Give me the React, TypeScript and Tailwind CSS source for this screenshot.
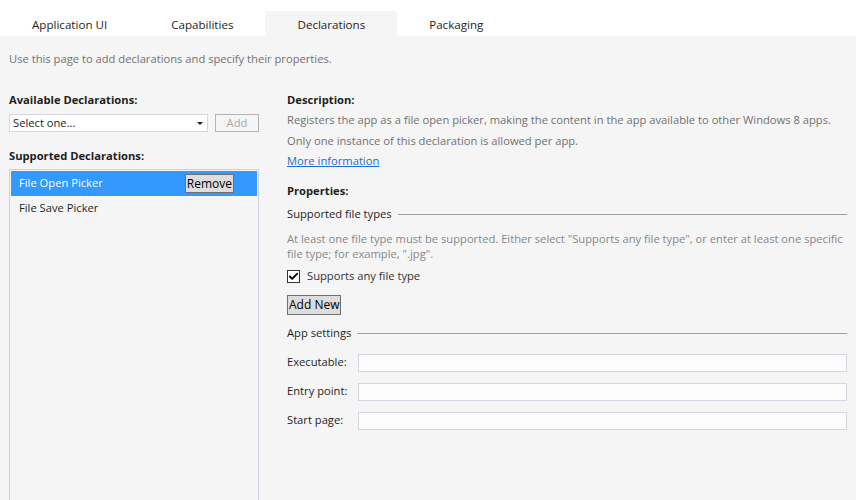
import { Check } from "lucide-react";

const tabs = [
  { name: "Application UI" },
  { name: "Capabilities" },
  { name: "Declarations", active: true },
  { name: "Packaging" },
];

const appSettings = ["Executable:", "Entry point:", "Start page:"];

const GroupTitle = ({ title }: { title: string }) => (
  <div className="flex items-center gap-[6px] h-4 text-[#1e1e1e]">
    <span className="whitespace-nowrap">{title}</span>
    <div className="flex-1 h-px bg-[#a0a0a0]" />
  </div>
);

export default function App() {
  return (
    <div
      className="w-[856px] h-[500px] overflow-hidden bg-[#f5f5f5] text-[11.2px] text-[#1e1e1e]"
      style={{ fontFamily: '"Open Sans", "Noto Sans", sans-serif' }}
    >
      {/* Tab strip */}
      <div className="h-[36px] bg-white flex items-end">
        {tabs.map((tab) => (
          <div
            key={tab.name}
            className={`h-[25px] px-[32px] pt-[2px] flex items-center text-[11.6px] ${
              tab.active ? "bg-[#f5f5f5]" : ""
            }`}
          >
            {tab.name}
          </div>
        ))}
      </div>

      <div className="pl-[9px] pt-[15px] leading-4 text-[#717171]">
        Use this page to add declarations and specify their properties.
      </div>

      <div className="flex mt-[25px] pl-[9px] pr-[9px]">
        {/* Left column */}
        <div className="w-[250px] shrink-0">
          <div className="font-bold leading-4">Available Declarations:</div>
          <div className="flex mt-[6px] gap-[7px]">
            <div className="w-[199px] h-[18px] bg-white border border-[#d6d5e0] flex items-center justify-between pl-[3px] pr-[4px]">
              <span>Select one...</span>
              <div className="w-0 h-0 border-l-[3px] border-r-[3px] border-t-[3px] border-l-transparent border-r-transparent border-t-[#1e1e1e]" />
            </div>
            <button className="w-[44px] h-[18px] border border-[#b4b4b4] text-[#a8a8a8] flex items-center justify-center">
              Add
            </button>
          </div>

          <div className="font-bold leading-4 mt-4">Supported Declarations:</div>
          <div className="mt-[5px] h-[340px] border border-[#d0cfe0] p-px">
            <div className="h-[25px] bg-[#3399ff] text-white flex items-center justify-between pl-[8px] pr-[23px]">
              <span>File Open Picker</span>
              <button className="h-[19px] px-px bg-[#dddddd] border border-[#707070] text-black flex items-center text-[12px]">
                Remove
              </button>
            </div>
            <div className="h-[25px] flex items-center pl-[8px]">File Save Picker</div>
          </div>
        </div>

        {/* Right column */}
        <div className="flex-1 ml-[28px]">
          <div className="font-bold leading-4">Description:</div>
          <div className="mt-[2px] leading-[20.5px] text-[#717171]">
            <div>
              Registers the app as a file open picker, making the content in the app available to other Windows 8 apps.
            </div>
            <div>Only one instance of this declaration is allowed per app.</div>
            <a href="#" className="text-[#1a6fce] underline">
              More information
            </a>
          </div>

          <div className="font-bold leading-4 mt-[11px]">Properties:</div>
          <div className="mt-2">
            <GroupTitle title="Supported file types" />
          </div>
          <div className="mt-2 leading-[15px] text-[#888888]">
            At least one file type must be supported. Either select "Supports any file type", or enter at least one specific
            <br />
            file type; for example, ".jpg".
          </div>
          <label className="mt-2 flex items-center gap-[7px] h-4 text-[#333333]">
            <span className="w-[13px] h-[13px] bg-white border border-[#333333] flex items-center justify-center">
              <Check size={11} strokeWidth={4} className="text-black" />
            </span>
            Supports any file type
          </label>
          <button className="mt-[10px] h-[20px] px-px bg-[#dddddd] border border-[#707070] text-black flex items-center text-[12px]">
            Add New
          </button>

          <div className="mt-[11px]">
            <GroupTitle title="App settings" />
          </div>
          <div className="mt-[12px] flex flex-col gap-[11px]">
            {appSettings.map((label) => (
              <div key={label} className="flex items-center">
                <span className="w-[71px] shrink-0">{label}</span>
                <div className="flex-1 h-[18px] bg-[#fcfcfc] border border-[#d6d5e0]" />
              </div>
            ))}
          </div>
        </div>
      </div>
    </div>
  );
}
